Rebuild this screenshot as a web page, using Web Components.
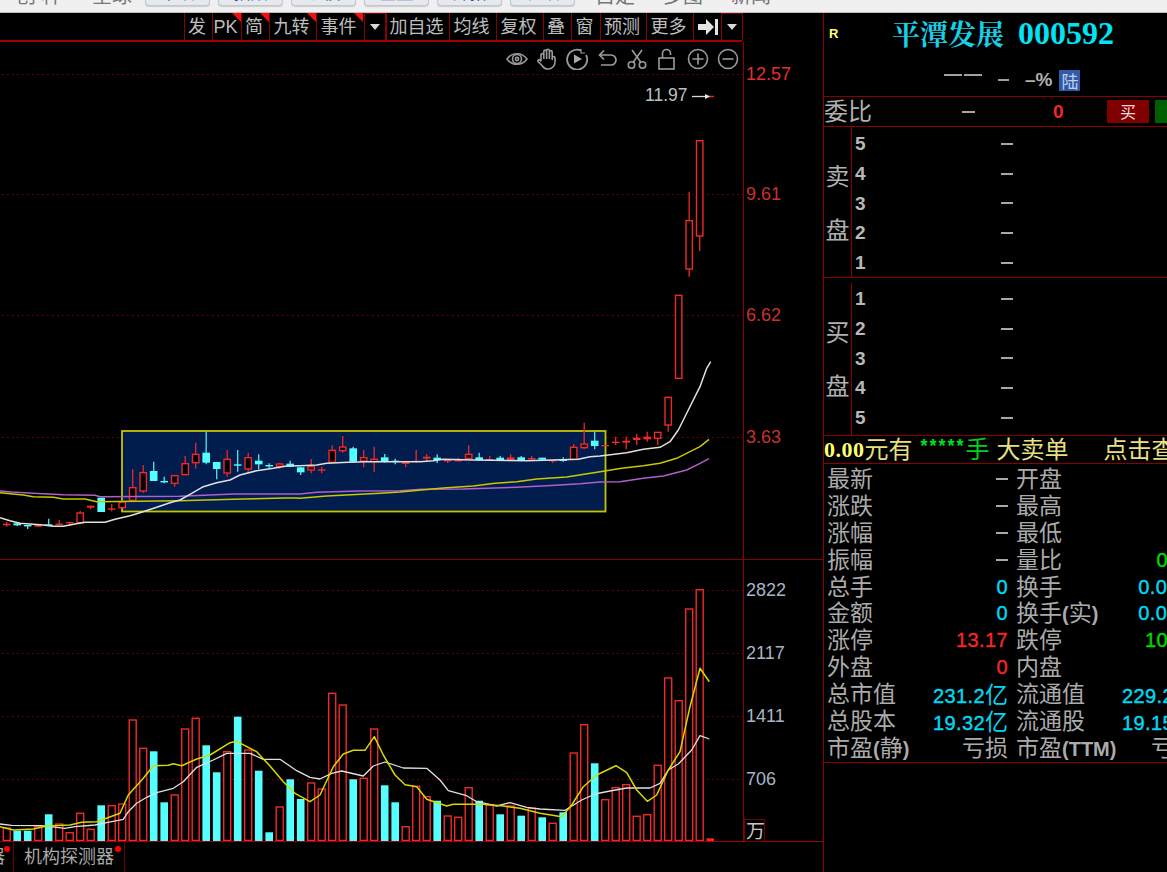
<!DOCTYPE html>
<html lang="zh"><head><meta charset="utf-8"><title>平潭发展 000592</title>
<style>html,body{margin:0;padding:0;background:#000;overflow:hidden;width:1167px;height:872px}</style></head>
<body><stock-app></stock-app>
<script>
const CJK='"Liberation Sans","Noto Sans CJK SC",sans-serif';
const RED='#8a0000';
function def(name,css,html,init){
  customElements.define(name,class extends HTMLElement{
    connectedCallback(){
      if(this.shadowRoot)return;
      const r=this.attachShadow({mode:'open'});
      r.innerHTML='<style>'+css+'</style>'+(typeof html==='function'?html(this):html);
      if(init)init(r,this);
    }
  });
}

/* ---------- top strip (cropped window chrome) ---------- */
def('top-strip',`:host{display:flex;height:12px;background:#f0f0f0;border-bottom:1px solid #bdbdbd;overflow:hidden;align-items:flex-end;font:20px ${CJK};color:#777}
 .t{flex:none;line-height:26px;height:26px;margin-bottom:3px}
 .b{flex:none;width:63px;height:26px;margin-bottom:6px;border:1px solid #c4c8cc;border-radius:4px;background:#e6eaee;color:#2a4fa0;font-size:17px;line-height:30px;text-align:center;box-shadow:0 1px 1px #ccc}`,
 `<span class="t" style="margin-left:16px;width:76px">创 种</span><span class="t" style="width:53px">全球</span>
 <span class="b">下跌</span><span class="b" style="margin-left:8px">指数</span><span class="b" style="margin-left:8px">规模</span><span class="b" style="margin-left:8px">全盘</span><span class="b" style="margin-left:8px">开拓</span><span class="b" style="margin-left:8px">长跌</span>
 <span class="t" style="margin-left:20px;width:68px">自定</span><span class="t" style="width:68px">多图</span><span class="t">新闻</span>`);

/* ---------- toolbar ---------- */
def('tool-btn',`:host{display:flex;flex:none;box-sizing:border-box;height:27px;padding:2px 3px 0 0;align-items:center;justify-content:center;border-left:1px solid ${RED};position:relative;font:18px/25px ${CJK};color:#bdbdbd;white-space:nowrap}
 .c{position:absolute;right:0;top:0;width:0;height:0;border-top:9px solid #f01010;border-left:9px solid transparent}`,
 h=>`${h.hasAttribute('corner')?'<i class="c"></i>':''}<slot></slot>`);
def('drop-btn',`:host{display:flex;flex:none;box-sizing:border-box;height:27px;width:22px;margin-left:1px;align-items:center;justify-content:center;border:1px solid ${RED};border-width:1px 1px 0 1px}
 i{width:0;height:0;border:5px solid transparent;border-top:6px solid #d8d8d8;border-bottom:0}`,`<i></i>`);
def('chart-toolbar',`:host{display:flex;height:27px;padding-left:184px;box-sizing:content-box;border-bottom:2px solid #a00000;width:558px}`,
 ()=>{
  const items=[['发',28],['PK',29,1],['简',28,1],['九转',47,1],['事件',47,1]];
  const after=[['加自选',63],['均线',47],['复权',47],['叠',28],['窗',29],['预测',46],['更多',47]];
  const b=a=>`<tool-btn style="width:${a[1]}px" ${a[2]?'corner':''}>${a[0]}</tool-btn>`;
  return items.map(b).join('')+'<drop-btn></drop-btn>'+after.map(b).join('')+
  `<tool-btn style="width:28px;padding:0"><svg width="22" height="18" viewBox="0 0 22 18"><path d="M1 6h8V1l8 8-8 8v-5H1z" fill="#e4e4e4"/><rect x="18" y="1" width="3" height="16" fill="#e4e4e4"/></svg></tool-btn><drop-btn style="margin-left:0;width:22px"></drop-btn>`;
 });

/* ---------- small icon row, over the chart ---------- */
def('chart-icons',`:host{position:absolute;left:506px;top:6px;display:flex;gap:8.1px;height:22px;align-items:center}
 svg{width:22px;height:22px;fill:none;stroke:#9a9a9a;stroke-width:1.6;flex:none}`,
 `<svg viewBox="0 0 22 22"><path d="M1 11C6 4 16 4 21 11 16 18 6 18 1 11Z"/><circle cx="11" cy="11" r="4.5"/><circle cx="11" cy="11" r="1.6"/></svg>
 <svg viewBox="0 0 22 22"><path d="M5 13V7a1.4 1.4 0 0 1 2.8 0v4M7.8 11V3.5a1.4 1.4 0 0 1 2.8 0V11M10.6 10V2.6a1.4 1.4 0 0 1 2.8 0V11M13.4 11V4a1.4 1.4 0 0 1 2.8 0v8M16.2 10a1.4 1.4 0 0 1 2.8 0v4c0 4-3 7-7 7-3 0-4.500-1-6-3.500L2 13.500c-.8-1.500 1.200-2.500 2.200-1.200L5 13.500"/></svg>
 <svg viewBox="0 0 22 22"><path d="M15 2.400A10 10 0 1 0 20 7" stroke-width="1.800"/><path d="M15 1v4h4" stroke-width="1.200"/><path d="M8 6.500l8 4.500-8 4.500z" fill="#a8a8a8" stroke="none"/></svg>
 <svg viewBox="0 0 22 22"><path d="M8 2.500L3.500 7 8 11.500M3.500 7H15a4.500 4.500 0 0 1 0 10H5" stroke-width="1.700"/></svg>
 <svg viewBox="0 0 22 22"><circle cx="5.500" cy="17" r="3.200"/><circle cx="16.500" cy="17" r="3.200"/><path d="M7 14.500L16 2M15 14.500L6 2"/></svg>
 <svg viewBox="0 0 22 22"><rect x="3" y="10" width="15" height="11"/><path d="M6.500 10V5.500a4 4 0 0 1 8 0V7"/></svg>
 <svg viewBox="0 0 22 22"><circle cx="11" cy="11" r="9.500"/><path d="M5.500 11h11M11 5.500v11"/></svg>
 <svg viewBox="0 0 22 22"><circle cx="11" cy="11" r="9.500"/><path d="M5.500 11h11"/></svg>`);

/* ---------- chart ---------- */
const cx=i=>6.7+10.5*i;
const mp=(ox,oy)=>pts=>pts.map(p=>[ox+p[0]/3,oy+p[1]/3]);
const z6=mp(0,420),z7=mp(300,410),z8=mp(600,120),z9=mp(0,680),z10=mp(270,680),z11=mp(540,570);
const S=a=>a.map(p=>p[0].toFixed(1)+','+p[1].toFixed(1)).join(' ');
function chartSvg(){
 const vol=[['r',828],['c',830.7],['c',830.7],['r',826.7],['c',814.3],['r',824],['r',832.7],['r',813.3],['r',829.3],['c',805.3],['r',805.7],['r',804],['r',720],['r',748.3],['c',751.3],['c',802.3],['r',795],['r',729],['r',718.3],['c',745.3],['c',772.3],['r',751.7],['c',716.7],['r',750],['c',770.7],['c',832.3],['r',807],['c',779.3],['c',799],['r',783],['r',789],['r',693.3],['r',705],['c',779.3],['r',778.3],['r',729],['c',785.3],['c',802.3],['r',826.7],['r',786.3],['r',796.7],['c',800.7],['r',816],['r',817.3],['r',787.7],['c',800.7],['r',805],['c',814.3],['r',806],['c',815.7],['r',808.3],['c',817.3],['r',823.3],['c',812.3],['r',753],['r',724.7],['c',763.3],['r',799.7],['r',787.7],['r',784.700],['r',816.3],['r',814.7],['r',765.3],['r',678],['r',700.7],['r',609],['r',589.7],['s',838.3]];
 const base=841;
 let v='';
 vol.forEach((b,i)=>{
  const x=cx(i)-3.5,y=b[1];
  if(b[0]=='c')v+=`<rect x="${x-.3}" y="${y}" width="7.600" height="${base-y}" fill="#55ffff"/>`;
  else if(b[0]=='r')v+=`<rect x="${x}" y="${y}" width="7" height="${base-y-.5}" fill="#000" stroke="#f02828" stroke-width="1.400"/>`;
  else v+=`<rect x="${x-.3}" y="${y}" width="7.600" height="${base-y}" fill="#f02828"/>`;
 });
 // candles: high, top, bottom, low, type
 const y6=n=>420+n/3,y7=n=>410+n/3,y8=n=>120+n/3;
 const c6=[[305,311,316,320,'s'],[310,310,316,318,'c'],[315,315,318,327,'c'],[312,312,320,320,'s'],[296,313,318,318,'c'],[300,311,315,316,'s'],[306,306,310,318,'s'],[273,279,308,312,'h'],[257,257,263,268,'s'],[233,233,276,276,'c'],[252,265,268,274,'s'],[240,246,263,265,'h'],[148,203,241,243,'h'],[135,158,213,218,'h'],[125,153,183,183,'c'],[170,183,187,190,'c'],[167,167,190,200,'h'],[108,131,164,164,'h'],[68,103,128,146,'h'],[35,98,128,133,'c'],[126,126,147,178,'c'],[90,118,159,170,'h'],[90,133,136,155,'c'],[98,113,147,155,'h'],[103,122,133,148,'c'],[130,135,138,145,'c'],[128,132,139,146,'h'],[122,131,140,140,'c']];
 const c7=[[172,172,187,195,'c'],[147,170,180,190,'h'],[170,178,182,190,'s'],[106,121,157,160,'h'],[78,111,122,128,'h'],[110,115,155,158,'c'],[120,143,153,172,'h'],[110,148,155,186,'h'],[132,142,155,158,'c'],[146,152,156,163,'c'],[152,157,162,172,'s'],[120,152,156,158,'s'],[132,140,146,155,'s'],[133,143,150,159,'c'],[150,150,153,159,'s'],[143,150,153,154,'s'],[106,133,145,150,'h'],[128,142,150,152,'c'],[138,147,150,152,'s'],[138,143,150,152,'c'],[133,142,150,152,'s'],[138,142,150,152,'c'],[138,144,147,150,'s'],[143,143,149,149,'c'],[150,150,153,158,'s'],[142,147,153,155,'c'],[102,112,148,150,'h'],[38,102,113,118,'h'],[65,92,108,118,'c']];
 const c8=[[975,975,978,978,'s'],[950,965,968,975,'s'],[950,962,968,988,'s'],[942,953,960,975,'s'],[935,950,958,965,'s'],[937,937,955,975,'h'],[832,832,915,935,'h'],[526,526,775,775,'h'],[215,302,447,470,'h'],[62,62,348,393,'h']];
 let all=[...c6.map(c=>c.slice(0,4).map(y6).concat(c[4])),...c7.map(c=>c.slice(0,4).map(y7).concat(c[4])),...c8.map(c=>c.slice(0,4).map(y8).concat(c[4]))];
 let k='';
 all.forEach((c,i)=>{
  const x=cx(i),col=c[4]=='c'?'#4fe8ee':'#ee2828',bc=c[4]=='c'?'#55ffff':'#f02828';
  k+=`<line x1="${x}" x2="${x}" y1="${c[0]}" y2="${c[3]}" stroke="${col}" stroke-width="1.300"/>`;
  if(c[4]=='h')k+=`<rect x="${x-3.2}" y="${c[1]}" width="6.400" height="${c[2]-c[1]}" fill="#000" stroke="#f02828" stroke-width="1.400"/>`;
  else k+=`<rect x="${x-3.8}" y="${c[1]}" width="7.600" height="${Math.max(1.4,c[2]-c[1])}" fill="${bc}"/>`;
 });
 const white=[...z6([[0,293],[30,302],[60,310],[100,313],[130,315],[160,319],[190,319],[225,312],[255,307],[315,307],[345,298],[390,287],[420,278],[470,262],[510,248],[540,240],[575,220],[610,200],[650,188],[690,180],[720,165],[770,152],[820,145],[860,138]]),...z7([[0,167],[50,165],[80,160],[145,157],[200,155],[360,155],[400,152],[430,148],[520,150],[680,152],[835,148],[870,140]]),...z8([[0,1008],[80,998],[130,988],[180,982],[210,965],[235,930],[265,870],[300,800],[320,745],[332,725]])];
 const yel=[...z6([[0,218],[70,225],[100,230],[160,232],[190,237],[255,237],[290,245],[540,242],[700,238],[855,234],[885,234]]),...z7([[0,265],[80,258],[240,250],[300,246],[430,234],[520,228],[585,220],[650,215],[710,207],[800,201],[900,185]]),...z8([[65,1045],[130,1037],[180,1030],[230,1015],[270,995],[300,980],[327,958]])];
 const pur=[...z6([[0,213],[35,216],[100,220],[190,224],[285,226],[300,230],[540,229],[700,222],[885,222]]),...z7([[0,252],[50,247],[175,243],[300,242],[365,238],[490,237],[650,232],[740,227],[840,221],[900,216],[960,215]]),...z8([[130,1075],[190,1068],[260,1050],[300,1030],[327,1016]])];
 const vw=[...z9([[0,432],[35,436],[125,437],[195,445],[225,440],[285,435],[320,428],[370,418],[385,395],[410,370],[440,352],[470,338],[520,325],[550,305],[590,262],[640,240],[680,220],[750,220],[790,238]]),...z10([[0,238],[30,238],[80,272],[120,292],[150,297],[185,280],[215,273],[280,288],[310,258],[345,246],[400,264],[470,265],[510,300],[535,332],[590,347],[620,365],[680,378],[720,368],[770,382]]),...z11([[0,717],[75,721],[125,690],[165,672],[210,663],[260,654],[330,654],[360,640],[385,600],[415,582],[455,540],[480,497],[508,507]])];
 const vy=[...z9([[0,440],[40,450],[100,447],[140,438],[210,435],[245,427],[290,425],[360,400],[385,345],[430,295],[460,257],[505,256],[520,251],[545,257],[590,237],[630,225],[690,188],[710,184],[770,215]]),...z10([[0,258],[40,305],[75,340],[120,365],[150,345],[190,260],[220,222],[250,211],[285,211],[313,170],[340,225],[375,285],[405,314],[440,320],[470,358],[530,378],[550,373],[640,373],[700,378],[750,385]]),...z11([[0,730],[65,740],[95,705],[130,650],[170,615],[228,587],[260,608],[290,660],[322,694],[350,675],[385,600],[420,545],[450,410],[480,295],[508,335]])];
 const grid=[74,194,315,437,590,653,716,779].map(y=>`<line x1="2" x2="743" y1="${y+.5}" y2="${y+.5}" stroke="#8a0000" stroke-dasharray="1.500 3.500"/>`).join('');
 const pl=(p,c,w)=>`<polyline points="${S(p)}" fill="none" stroke="${c}" stroke-width="${w}" stroke-linejoin="round"/>`;
 const lab=(t,y,c)=>`<text x="746" y="${y}" fill="${c}">${t}</text>`;
 return `<svg viewBox="0 42 823 800" width="823" height="800" style="display:block">
 ${grid}
 <rect x="122" y="431" width="483.500" height="80.500" fill="#001d4e" stroke="#c4c400" stroke-width="1.800"/>
 ${k}
 ${pl(pur,'#b060c8',1.500)}${pl(yel,'#c8c800',1.500)}${pl(white,'#e0e0e0',1.500)}
 ${v}
 ${pl(vw,'#e0e0e0',1.300)}${pl(vy,'#d8d800',1.500)}
 <line x1="743.500" x2="743.500" y1="42" y2="842" stroke="${RED}"/>
 <line x1="0" x2="823" y1="559.500" y2="559.500" stroke="${RED}"/>
 <line x1="0" x2="823" y1="841.500" y2="841.500" stroke="#a00000"/>
 <rect x="744.500" y="819.500" width="20" height="22" fill="none" stroke="#7a0000"/>
 <g font-family="Liberation Sans, sans-serif" font-size="18">
 ${lab('12.57',80,'#e03030')}${lab('9.61',200,'#c83030')}${lab('6.62',321,'#c83030')}${lab('3.63',443,'#c83030')}
 ${lab('2822',596,'#a8b4c4')}${lab('2117',659,'#a8b4c4')}${lab('1411',722,'#a8b4c4')}${lab('706',785,'#a8b4c4')}
 <text x="645" y="101" fill="#b8c0c8" font-size="17.500">11.97</text></g>
 <text x="746" y="838" fill="#c8c8c8" font-size="19" font-family="Noto Sans CJK SC, sans-serif">万</text>
 <path d="M692 96.500h18" stroke="#d8d8d8" stroke-width="1.300"/><path d="M705 94l5 2.500-5 2.500z" fill="#e8e8e8"/><path d="M709.500 96.500h4.500" stroke="#f02020" stroke-width="1.500"/>
 </svg>`;
}
def('kline-chart',`:host{display:block;position:relative;height:800px;width:823px}`,
 ()=>chartSvg()+'<chart-icons></chart-icons>');

/* ---------- bottom tabs ---------- */
def('bottom-tabs',`:host{display:flex;height:30px;font:18px/30px ${CJK};color:#a8a8a8;overflow:hidden}
 .tab{position:relative;flex:none;box-sizing:border-box;border-right:1px solid #6a0000;text-align:center}
 .d{position:absolute;top:4px;right:3px;width:6px;height:6px;border-radius:50%;background:#f00}`,
 `<div class="tab" style="width:14px;overflow:hidden"><span style="display:block;width:18px;margin-left:-13px">器</span><i class="d"></i></div>
  <div class="tab" style="width:111px">机构探测器<i class="d"></i></div>`);

/* ---------- quote panel ---------- */
def('quote-header',`:host{display:block;box-sizing:border-box;height:84px;border-bottom:1px solid ${RED};position:relative;font-family:${CJK};color:#b0b0b0}
 .top{display:flex;height:40px;align-items:center;padding-left:5px}
 .r{font:bold 13px "Liberation Sans",sans-serif;color:#ffff70;width:63px}
 .n{font:bold 28px/40px "Noto Serif CJK SC","Noto Sans CJK SC",serif;color:#19cfe6;white-space:nowrap}
 .c{font:bold 32px/40px "Liberation Serif",serif;color:#00e4f4;margin-left:14px}
 .p{display:flex;height:34px;margin-top:10px;align-items:center;padding-left:120px;font:18px "Liberation Sans",sans-serif}
 .l{display:inline-block;height:2px;background:#a0a0a0}
 .lu{flex:none;width:21px;height:21px;background:#2f5aa8;color:#c0d0f0;font:17px/21px "Noto Sans CJK SC",sans-serif;text-align:center;margin-left:7px}`,
 `<div class="top"><span class="r">R</span><span class="n">平潭发展</span><span class="c">000592</span></div>
  <div class="p"><i class="l" style="width:18px;margin-right:2px;margin-top:-10px"></i><i class="l" style="width:18px;margin-right:16px;margin-top:-10px"></i><i class="l" style="width:11px;margin-right:16px"></i><span style="color:#b0b0b0;font-weight:bold;font-size:19px">–%</span><span class="lu">陆</span></div>`);
def('ratio-row',`:host{display:flex;box-sizing:border-box;height:30px;border-bottom:1px solid ${RED};align-items:center;font:24px/30px ${CJK};color:#b0b0b0;white-space:nowrap}
 .v{margin-left:90px;width:13px;height:2px;background:#a8a8a8}
 .z{margin-left:78px;color:#f02828;font:bold 19px "Liberation Sans",sans-serif;width:12px}
 .buy,.g{flex:none;width:42px;height:23px;background:#800000;color:#e8d8d8;font:16px/23px "Noto Sans CJK SC",sans-serif;text-align:center}
 .buy{margin-left:42px}.g{background:#006000;margin-left:6px}`,
 `<span>委比</span><i class="v"></i><span class="z">0</span><span class="buy">买</span><span class="g"></span>`);
def('order-book',`:host{display:flex;box-sizing:border-box;border-bottom:1px solid ${RED};font-family:${CJK};color:#b0b0b0;padding-top:var(--pt,0)}
 .side{flex:none;width:28px;box-sizing:border-box;border-right:1px solid ${RED};display:flex;flex-direction:column;align-items:center;justify-content:center;gap:30px;font-size:24px;line-height:24px;padding-top:var(--st,0)}
 .rows{flex:1;padding-top:var(--rt,0)}
 .row{display:flex;height:29.8px;align-items:center;padding-left:3px;font:bold 19px/29.8px "Liberation Sans",sans-serif;color:#b8b8b8}
 .row b{width:146px}.row i{width:12px;height:2px;background:#a8a8a8}`,
 h=>{
  const n=h.getAttribute('order').split('');
  const l=h.getAttribute('label').split('');
  return `<div class="side">${l.map(c=>`<span>${c}</span>`).join('')}</div><div class="rows">${n.map(d=>`<div class="row"><b>${d}</b><i></i></div>`).join('')}</div>`;
 });
def('big-order',`:host{display:flex;box-sizing:border-box;height:28px;border-bottom:1px solid ${RED};align-items:center;font:24px/27px ${CJK};color:#e8e080;white-space:nowrap}
 .n{font:bold 22px "Liberation Serif",serif;color:#ffff70;letter-spacing:.5px}
 .s{color:#00e020;font:bold 18px "Liberation Sans",sans-serif;margin-left:8px;letter-spacing:2px;position:relative;top:-3px}
 .h{color:#00d020}`,
 `<span class="n">0.00</span><span>元有</span><span class="s">*****</span><span class="h">手</span><span style="margin-left:7px">大卖单</span><span style="margin-left:35px">点击查询</span>`);
def('stat-grid',`:host{display:grid;grid-template-columns:181px 181px;column-gap:8px;grid-auto-rows:26.9px;padding:2px 0 0 3px;box-sizing:border-box;height:299px;border-bottom:1px solid ${RED};font:23px/26.9px ${CJK};color:#ababab;white-space:nowrap}
 .c{display:flex;justify-content:space-between;align-items:center;height:26.9px}
 .v{font:20px/26.9px "Liberation Sans","Noto Sans CJK SC",sans-serif;letter-spacing:.4px;-webkit-text-stroke:.4px currentColor}
 .d{display:inline-block;width:12px;height:2px;background:#a8a8a8}
 .cy{color:#00d8f0}.re{color:#f02828}.gr{color:#00d800}.gy{color:#ababab;-webkit-text-stroke:0;font-size:23px;letter-spacing:0}
 .yi{font-size:23px;-webkit-text-stroke:0;letter-spacing:0;font-family:"Noto Sans CJK SC",sans-serif}
 .pa{font:bold 20px "Liberation Sans",sans-serif}`,
 ()=>{
  const D='<i class="d"></i>';
  const rows=[
   ['最新',D,'开盘',''],['涨跌',D,'最高',''],['涨幅',D,'最低',''],['振幅',D,'量比','<span class="v gr">0.00</span>'],
   ['总手','<span class="v cy">0</span>','换手','<span class="v cy">0.00%</span>'],
   ['金额','<span class="v cy">0</span>','换手<span class="pa">(</span>实<span class="pa">)</span>','<span class="v cy">0.00%</span>'],
   ['涨停','<span class="v re">13.17</span>','跌停','<span class="v gr">10.78</span>'],
   ['外盘','<span class="v re">0</span>','内盘',''],
   ['总市值','<span class="v cy">231.2<span class="yi">亿</span></span>','流通值','<span class="v cy">229.2<span class="yi">亿</span></span>'],
   ['总股本','<span class="v cy">19.32<span class="yi">亿</span></span>','流通股','<span class="v cy">19.15<span class="yi">亿</span></span>'],
   ['市盈<span class="pa">(</span>静<span class="pa">)</span>','<span class="v gy">亏损</span>','市盈<span class="pa">(TTM)</span>','<span class="v gy">亏损</span>']];
  return rows.map(r=>`<div class="c"><span>${r[0]}</span>${r[1]}</div><div class="c"><span>${r[2]}</span>${r[3]}</div>`).join('');
 });
def('quote-panel',`:host{display:flex;flex-direction:column;width:344px;box-sizing:border-box;height:859px;border-left:1px solid ${RED};overflow:hidden}
 .in{width:374px}`,
 `<div class="in"><quote-header></quote-header><ratio-row></ratio-row>
 <order-book order="54321" label="卖盘" style="height:151px;--rt:2px;--st:4px"></order-book>
 <order-book order="12345" label="买盘" style="height:158px;--pt:5px;--rt:1px;--st:2px"></order-book>
 <big-order></big-order><stat-grid></stat-grid></div>`);

/* ---------- app ---------- */
def('stock-app',`:host{display:block;width:1167px;height:872px;overflow:hidden;background:#000}
 .main{display:grid;grid-template-columns:823px 344px;height:859px}
 .left{display:flex;flex-direction:column;min-width:0}`,
 `<top-strip></top-strip><div class="main"><div class="left"><chart-toolbar></chart-toolbar><kline-chart></kline-chart><bottom-tabs></bottom-tabs></div><quote-panel></quote-panel></div>`);
</script></body></html>
